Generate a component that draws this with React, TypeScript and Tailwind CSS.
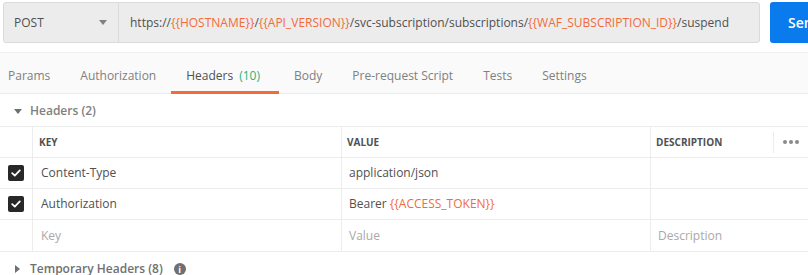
import React from 'react';

const tabs = [
  { label: 'Params' },
  { label: 'Authorization' },
  { label: 'Headers', count: '(10)', active: true },
  { label: 'Body' },
  { label: 'Pre-request Script' },
  { label: 'Tests' },
  { label: 'Settings' },
];

const Var: React.FC<{ name: string }> = ({ name }) => (
  <span className="text-[#f26b3a]">{`{{${name}}}`}</span>
);

const Check: React.FC = () => (
  <div className="w-4 h-4 rounded-[2px] bg-[#282828] flex items-center justify-center">
    <svg width="10" height="8" viewBox="0 0 10 8">
      <path d="M1.2 4.2 L3.8 6.6 L8.8 1.4" fill="none" stroke="white" strokeWidth="1.8" strokeLinecap="round" strokeLinejoin="round" />
    </svg>
  </div>
);

type Row = { key: React.ReactNode; value: React.ReactNode; desc?: React.ReactNode; checked: boolean; placeholder?: boolean };

const rows: Row[] = [
  { key: 'Content-Type', value: 'application/json', checked: true },
  { key: 'Authorization', value: <span>Bearer <Var name="ACCESS_TOKEN" /></span>, checked: true },
  { key: 'Key', value: 'Value', desc: 'Description', checked: false, placeholder: true },
];

export default function App() {
  return (
    <div className="w-[808px] h-[275px] overflow-hidden bg-white text-[12px] text-[#505050]" style={{ fontFamily: '"Open Sans", sans-serif' }}>
      {/* Request bar */}
      <div className="h-[53px] flex items-start pt-[2px] pl-[3px] border-b border-[#ededed]">
        <div className="w-[757px] h-[41px] flex bg-[#ececec] border border-[#dadada] rounded-[3px] shrink-0">
          <div className="w-[115px] shrink-0 flex items-center justify-between pl-[10px] pr-[11px] border-r border-[#dadada]">
            <span>POST</span>
            <svg width="8" height="5" viewBox="0 0 8 5">
              <path d="M0 0 H8 L4 5 Z" fill="#808080" />
            </svg>
          </div>
          <div className="flex-1 flex items-center pl-[11px] whitespace-nowrap">
            https://<Var name="HOSTNAME" />/<Var name="API_VERSION" />/svc-subscription/subscriptions/<Var name="WAF_SUBSCRIPTION_ID" />/suspend
          </div>
        </div>
        <button className="ml-[10px] shrink-0 w-[100px] h-[41px] rounded-[3px] bg-[#097bed] text-white font-semibold text-left pl-[18px] text-[14px]">
          Send
        </button>
      </div>

      {/* Tabs */}
      <div className="h-[41px] bg-[#fafafa] border-b border-[#ececec] flex -ml-[7px]">
        {tabs.map((t) => (
          <div
            key={t.label}
            className={`pt-[8px] flex items-center border-b-[3px] -mb-px whitespace-nowrap ${t.active ? 'pl-[15px] pr-[19px] border-[#f26b3a] text-[#505050]' : 'px-[15px] border-transparent text-[#808080]'}`}
          >
            {t.label}
            {t.count && <span className="ml-[6px] text-[#26b47f]">{t.count}</span>}
          </div>
        ))}
      </div>

      {/* Headers section */}
      <div className="h-[33px] flex items-center pl-[14px] pt-[2px] border-b border-[#ececec]">
        <svg width="8" height="5" viewBox="0 0 8 5">
          <path d="M0 0 H8 L4 5 Z" fill="#707070" />
        </svg>
        <span className="ml-[8px] font-semibold text-[#808080]">Headers (2)</span>
      </div>

      {/* Table */}
      <div className="grid grid-cols-[33px_309px_309px_1fr] border-b border-[#ececec]">
        <div className="h-[31px] border-b border-r border-[#ececec]" />
        <div className="h-[31px] border-b border-r border-[#ececec] flex items-center pl-[6px] text-[10px] font-bold">KEY</div>
        <div className="h-[31px] border-b border-r border-[#ececec] flex items-center pl-[5px] text-[10px] font-bold">VALUE</div>
        <div className="h-[31px] border-b border-[#ececec] flex items-center pl-[5px] text-[10px] font-bold">
          <span className="flex-1">DESCRIPTION</span>
          <div className="h-[21px] w-[35px] border-l border-[#ececec] flex items-center justify-center gap-[2px]">
            <span className="w-[4px] h-[4px] rounded-full bg-[#8a8a8a]" />
            <span className="w-[4px] h-[4px] rounded-full bg-[#8a8a8a]" />
            <span className="w-[4px] h-[4px] rounded-full bg-[#8a8a8a]" />
          </div>
        </div>
        {rows.map((r, i) => {
          const last = i === rows.length - 1;
          const b = last ? '' : 'border-b';
          const tc = r.placeholder ? 'text-[#a9a9a9]' : 'text-[#505050]';
          return (
            <React.Fragment key={i}>
              <div className={`h-[31px] ${b} border-r border-[#ececec] flex items-center justify-center`}>
                {r.checked && <Check />}
              </div>
              <div className={`h-[31px] ${b} border-r border-[#ececec] flex items-center pl-[8px] ${tc}`}>{r.key}</div>
              <div className={`h-[31px] ${b} border-r border-[#ececec] flex items-center pl-[7px] ${tc}`}>{r.value}</div>
              <div className={`h-[31px] ${b} border-[#ececec] flex items-center pl-[7px] ${tc}`}>{r.desc}</div>
            </React.Fragment>
          );
        })}
      </div>

      {/* Temporary headers */}
      <div className="h-[34px] flex items-center pl-[15px]">
        <svg width="5" height="8" viewBox="0 0 5 8">
          <path d="M0 0 V8 L5 4 Z" fill="#707070" />
        </svg>
        <span className="ml-[10px] font-semibold text-[#707070]">Temporary Headers (8)</span>
        <span className="ml-[11px] w-[12px] h-[12px] rounded-full bg-[#707070] flex items-center justify-center text-white text-[9px] font-bold leading-none">i</span>
      </div>
    </div>
  );
}
